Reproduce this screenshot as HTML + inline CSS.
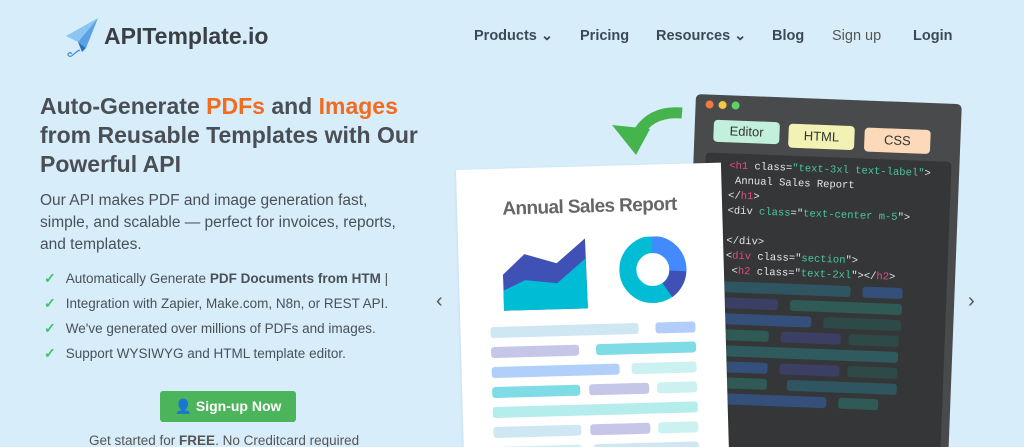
<!DOCTYPE html>
<html><head><meta charset="utf-8"><style>
*{margin:0;padding:0;box-sizing:border-box}
html,body{width:1024px;height:447px;overflow:hidden}
body{background:#d7edfa;font-family:"Liberation Sans",sans-serif;position:relative;color:#444}
.a{position:absolute}
.nav{font-size:14.5px;color:#3d4a56;font-weight:600;top:28px}
h1{position:absolute;left:40px;top:92px;font-size:23px;line-height:29px;color:#4a4f55;font-weight:700;width:385px}
h1 span{color:#f26b1f}
.p{left:40px;top:190px;font-size:15.5px;line-height:22px;color:#4a5058;width:380px}
.li{left:44px;font-size:13.5px;color:#4a5058}
.li i{color:#3dc46a;font-style:normal;font-weight:700;margin-right:10px;font-size:14px}
.bar{position:absolute;height:11px;border-radius:3px}
.code{font-family:"Liberation Mono",monospace;font-size:10.5px;color:#e6e6e6;line-height:15px;white-space:pre}
.t{color:#e04f7a}.s{color:#48c79c}
</style></head><body>
<svg class="a" style="left:64px;top:16px" width="36" height="44" viewBox="0 0 36 44"><polygon points="34,2 2,20 14,26" fill="#8cc4f2"/><polygon points="34,2 14,26 22,32" fill="#5aa2e6"/><polygon points="14,26 18,36 22,32" fill="#2a6fc0"/><path d="M16,34 C10,36 8,42 5,40 C2,38 6,35 8,38" stroke="#4a8bd0" fill="none" stroke-width="1.2"/></svg>
<div class="a" style="left:104px;top:23px;font-size:23px;font-weight:700;color:#3a3f45">APITemplate.io</div>
<div class="a nav" style="left:474px">Products &#8964;</div>
<div class="a nav" style="left:580px">Pricing</div>
<div class="a nav" style="left:656px">Resources &#8964;</div>
<div class="a nav" style="left:772px">Blog</div>
<div class="a nav" style="left:832px;font-weight:400;color:#555">Sign up</div>
<div class="a nav" style="left:913px">Login</div>
<h1>Auto-Generate <span>PDFs</span> and <span>Images</span> from Reusable Templates with Our Powerful API</h1>
<div class="a p">Our API makes PDF and image generation fast, simple, and scalable — perfect for invoices, reports, and templates.</div>
<div class="a li" style="top:270px"><i>✓</i>Automatically Generate <b>PDF Documents from HTM</b> |</div>
<div class="a li" style="top:295px"><i>✓</i>Integration with Zapier, Make.com, N8n, or REST API.</div>
<div class="a li" style="top:320px"><i>✓</i>We've generated over millions of PDFs and images.</div>
<div class="a li" style="top:345px"><i>✓</i>Support WYSIWYG and HTML template editor.</div>
<div class="a" style="left:160px;top:391px;width:136px;height:31px;background:#4cb45a;border-radius:3px;color:#fff;font-size:14px;font-weight:600;text-align:center;line-height:31px">&#128100; Sign-up Now</div>
<div class="a" style="left:89px;top:433px;height:14px;overflow:hidden;font-size:13.5px;line-height:16px;color:#555">Get started for <b>FREE</b>. No Creditcard required</div>
<div class="a" style="left:436px;top:290px;font-size:20px;color:#555">&#8249;</div>
<div class="a" style="left:968px;top:290px;font-size:20px;color:#555">&#8250;</div>
<div class="a" style="left:0;top:0;width:1024px;height:447px;overflow:hidden">
<!-- code window -->
<div class="a" style="left:696px;top:94px;width:266px;height:360px;background:#494a4c;border-radius:5px;transform:rotate(2.2deg);transform-origin:0 0">
 <div class="a" style="left:10px;top:6px;width:8px;height:8px;border-radius:50%;background:#f27b3c"></div>
 <div class="a" style="left:23px;top:6px;width:8px;height:8px;border-radius:50%;background:#f5c842"></div>
 <div class="a" style="left:36px;top:6px;width:8px;height:8px;border-radius:50%;background:#5fd160"></div>
 <div class="a" style="left:19px;top:25px;width:66px;height:22px;background:#c2f0dc;border-radius:4px;font-size:13px;text-align:center;line-height:22px;color:#333">Editor</div>
 <div class="a" style="left:94px;top:26px;width:66px;height:24px;background:#f2f2b4;border-radius:4px;font-size:13px;text-align:center;line-height:24px;color:#333">HTML</div>
 <div class="a" style="left:170px;top:27px;width:66px;height:24px;background:#fcd9b8;border-radius:4px;font-size:13px;text-align:center;line-height:24px;color:#333">CSS</div>
 <div class="a" style="left:12px;top:58px;width:246px;height:300px;background:#353638;border-radius:4px;overflow:hidden">
  <div class="a code" style="left:24px;top:6px"><span class="t">&lt;h1</span> class=<span class="s">"text-3xl text-label"</span>&gt;
 Annual Sales Report
&lt;/<span class="t">h1</span>&gt;
&lt;div <span class="s">class</span>="<span class="s">text-center m-5</span>"&gt;

&lt;/div&gt;
&lt;<span class="t">div</span> class="<span class="s">section</span>"&gt;
 &lt;<span class="t">h2</span> class="<span class="s">text-2xl</span>"&gt;&lt;/<span class="t">h2</span>&gt;</div>
  <div class="bar" style="left:0;top:128px;width:150px;background:#2f5560"></div><div class="bar" style="left:162px;top:128px;width:40px;background:#34507a"></div>
  <div class="bar" style="left:0;top:144px;width:78px;background:#3a3f63"></div><div class="bar" style="left:90px;top:144px;width:112px;background:#2f5a55"></div>
  <div class="bar" style="left:0;top:160px;width:112px;background:#34507a"></div><div class="bar" style="left:124px;top:160px;width:78px;background:#2e4a48"></div>
  <div class="bar" style="left:0;top:176px;width:70px;background:#2f5a55"></div><div class="bar" style="left:82px;top:176px;width:60px;background:#3a3f63"></div><div class="bar" style="left:150px;top:176px;width:50px;background:#2e4a48"></div>
  <div class="bar" style="left:0;top:192px;width:200px;background:#2f5a5e"></div>
  <div class="bar" style="left:0;top:208px;width:70px;background:#34507a"></div><div class="bar" style="left:82px;top:208px;width:60px;background:#3a3f63"></div><div class="bar" style="left:150px;top:208px;width:50px;background:#2e4a48"></div>
  <div class="bar" style="left:0;top:224px;width:70px;background:#2f5a55"></div><div class="bar" style="left:90px;top:224px;width:110px;background:#2f5560"></div>
  <div class="bar" style="left:0;top:240px;width:130px;background:#34507a"></div><div class="bar" style="left:142px;top:240px;width:40px;background:#2f5a55"></div>
 </div>
</div>
<!-- arrow -->
<svg class="a" style="left:608px;top:105px" width="80" height="55" viewBox="0 0 80 55"><path d="M74,8 C50,6 36,16 28,32" stroke="#45b44d" stroke-width="11" fill="none"/><polygon points="4,20 28,50 42,24" fill="#45b44d"/></svg>
<!-- paper -->
<div class="a" style="left:456px;top:170px;width:265px;height:290px;background:#fff;transform:rotate(-1.6deg);transform-origin:0 0;box-shadow:0 1px 3px rgba(0,0,0,.1)">
 <div class="a" style="left:0;top:30px;width:265px;text-align:center;font-size:19px;font-weight:700;color:#666;letter-spacing:-0.6px">Annual Sales Report</div>
 <svg class="a" style="left:44px;top:72px" width="190" height="80" viewBox="0 0 190 80"><polygon points="0,34 22,14 54,24 83,0 84,70 0,70" fill="#3f51b5"/><polygon points="0,50 22,40 54,44 83,20 84,70 0,70" fill="#00bcd4"/><circle cx="150" cy="33" r="25" fill="none" stroke="#00bcd4" stroke-width="17"/><path d="M150,8 A25,25 0 0 1 175,35" stroke="#448aff" stroke-width="17" fill="none"/><path d="M175,35 A25,25 0 0 1 164,54" stroke="#3f51b5" stroke-width="17" fill="none"/></svg>
 <div class="bar" style="left:30px;top:158px;width:148px;background:#cfe6f3"></div><div class="bar" style="left:195px;top:158px;width:40px;background:#b3cdfa"></div>
 <div class="bar" style="left:30px;top:178px;width:88px;background:#c5c6e8"></div><div class="bar" style="left:135px;top:178px;width:100px;background:#7fdbe5"></div>
 <div class="bar" style="left:30px;top:198px;width:128px;background:#b0cffa"></div><div class="bar" style="left:170px;top:198px;width:65px;background:#cbf1f1"></div>
 <div class="bar" style="left:30px;top:218px;width:88px;background:#7fdbe5"></div><div class="bar" style="left:127px;top:218px;width:60px;background:#c5c6e8"></div><div class="bar" style="left:195px;top:218px;width:40px;background:#cbf1f1"></div>
 <div class="bar" style="left:30px;top:238px;width:205px;background:#b5ecec"></div>
 <div class="bar" style="left:30px;top:258px;width:88px;background:#cfe6f3"></div><div class="bar" style="left:127px;top:258px;width:60px;background:#c5c6e8"></div><div class="bar" style="left:195px;top:258px;width:40px;background:#cbf1f1"></div>
 <div class="bar" style="left:30px;top:278px;width:88px;background:#cbf1f1"></div><div class="bar" style="left:130px;top:278px;width:105px;background:#cfe6f3"></div>
</div>
</div>
</body></html>
